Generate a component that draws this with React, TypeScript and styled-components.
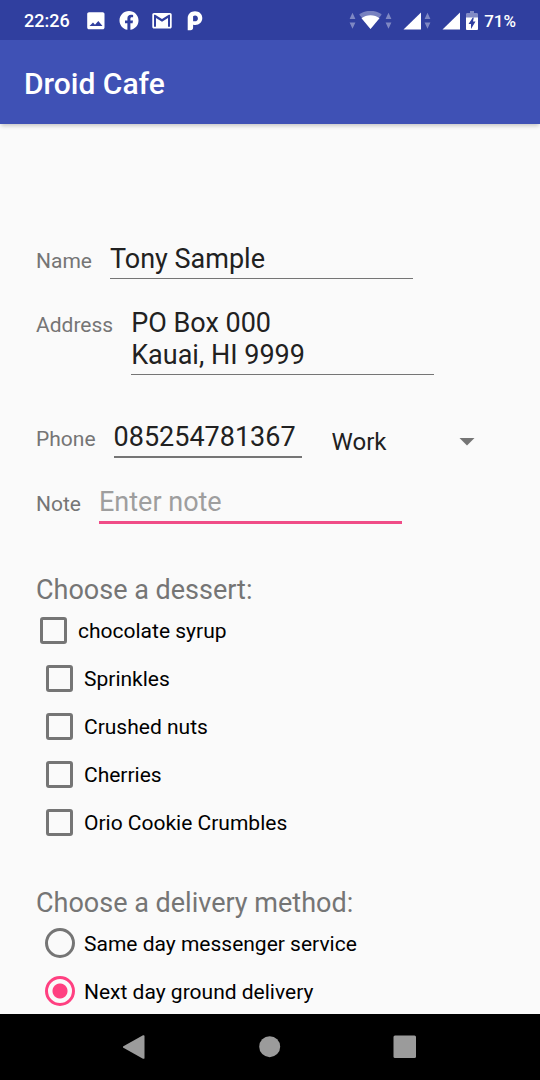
import React, { useState } from 'react';
import styled, { createGlobalStyle, css } from 'styled-components';

const GlobalStyle = createGlobalStyle`
  *, *::before, *::after { box-sizing: border-box; }
  body {
    margin: 0;
    background: #fafafa;
    font-family: Roboto, "Liberation Sans", sans-serif;
  }
`;

const Screen = styled.div`
  display: flex;
  flex-direction: column;
  height: 100vh;
`;

const StatusBar = styled.div`
  display: flex;
  flex: none;
  align-items: center;
  justify-content: space-between;
  height: 40px;
  padding: 1px 24px 0;
  background: #303f9f;
  color: #fff;
`;

const Notifications = styled.div`
  display: flex;
  align-items: center;
  gap: 9px;
`;

const Clock = styled.time`
  margin-right: 5px;
  font-size: 18px;
  font-weight: 500;
  line-height: 22px;
`;

const Indicators = styled.div`
  display: flex;
  align-items: center;
  gap: 11px;
`;

const Cluster = styled.div<{ $gap: number }>`
  display: flex;
  align-items: center;
  gap: ${({ $gap }) => $gap}px;
`;

const BatteryLevel = styled.span`
  font-size: 17px;
  font-weight: 500;
  line-height: 22px;
`;

const Glyph = styled.svg`
  display: block;
  flex: none;
  fill: currentColor;
`;

const AppBar = styled.header`
  display: flex;
  flex: none;
  align-items: center;
  height: 84px;
  padding: 3px 24px 0;
  background: #3f51b5;
  color: #fff;
  box-shadow: 0 3px 4px -1px rgba(0, 0, 0, 0.2);
  z-index: 1;
`;

const Title = styled.h1`
  margin: 0;
  font-size: 30px;
  font-weight: 500;
  line-height: 36px;
`;

const Content = styled.main`
  flex: 1;
  min-height: 0;
  overflow-y: auto;
  scrollbar-width: none;
  padding: 119px 36px 0;
`;

const Fields = styled.div`
  display: flex;
  flex-direction: column;
  gap: 28px;
`;

const FieldRow = styled.div<{ $roomy?: boolean }>`
  display: flex;
  align-items: baseline;
  gap: 18px;
  padding-bottom: ${({ $roomy }) => ($roomy ? 18 : 0)}px;
`;

const FieldLabel = styled.label`
  color: #757575;
  font-size: 21px;
  line-height: 24px;
`;

const fieldText = css`
  display: block;
  min-width: 0;
  margin: 0;
  padding: 0 0 3px;
  border: 0;
  border-radius: 0;
  outline: 0;
  background: transparent;
  color: #212121;
  font-family: inherit;
  font-size: 27px;
  line-height: 32px;
`;

const TextInput = styled.input<{ $width: number; $line?: number; $active?: boolean }>`
  ${fieldText}
  box-sizing: content-box;
  width: ${({ $width }) => $width}px;
  height: 32px;
  border-bottom: ${({ $line = 1 }) => $line}px solid ${({ $active }) => ($active ? '#f04c87' : '#757575')};

  &::placeholder {
    color: #9e9e9e;
    opacity: 1;
  }
`;

const TextArea = styled.textarea`
  ${fieldText}
  box-sizing: content-box;
  width: 303px;
  height: 64px;
  border-bottom: 1px solid #757575;
  overflow: hidden;
  resize: none;
`;

const SelectBox = styled.div`
  position: relative;
  align-self: flex-start;
  width: 143px;
  margin-left: 12px;
  padding-top: 7px;
`;

const Select = styled.select`
  display: block;
  width: 100%;
  padding: 0;
  border: 0;
  outline: 0;
  appearance: none;
  background: transparent;
  color: #212121;
  font-family: inherit;
  font-size: 24px;
  line-height: 28px;
`;

const SelectArrow = styled(Glyph)`
  position: absolute;
  top: 17px;
  right: 0;
  color: #757575;
  pointer-events: none;
`;

const PhoneRow = styled(FieldRow)`
  height: 37px;
`;

const Group = styled.fieldset<{ $space: number }>`
  min-width: 0;
  margin: ${({ $space }) => $space}px 0 0;
  padding: 0;
  border: 0;
`;

const GroupTitle = styled.legend`
  padding: 0;
  color: #757575;
  font-size: 27px;
  line-height: 32px;
`;

const Option = styled.label<{ $indent: number }>`
  display: flex;
  align-items: center;
  height: 48px;
  padding-left: ${({ $indent }) => $indent}px;
  color: #000;
  font-size: 21px;
  line-height: 24px;
`;

const OptionText = styled.span`
  padding-top: 2px;
`;

const Checkbox = styled.input`
  appearance: none;
  flex: none;
  width: 27px;
  height: 27px;
  margin: 0 11px 0 0;
  border: 3px solid #757575;
  border-radius: 3px;

  &:checked {
    border-color: #ff4081;
    background: #ff4081;
  }
`;

const Radio = styled.input`
  appearance: none;
  flex: none;
  width: 30px;
  height: 30px;
  margin: 0 9px 0 0;
  border: 3px solid #757575;
  border-radius: 50%;

  &:checked {
    border-color: #ff4081;
    background: radial-gradient(circle, #ff4081 7px, transparent 8px);
  }
`;

const NavBar = styled.nav`
  display: flex;
  flex: none;
  justify-content: center;
  height: 66px;
  background: #000;
`;

const NavButton = styled.button`
  display: flex;
  align-items: center;
  justify-content: center;
  width: 25%;
  padding: 0;
  border: 0;
  background: transparent;
  color: #9b9b9b;
`;

const DataArrows = () => (
  <Glyph width="8" height="18" viewBox="0 0 8 18" opacity="0.38">
    <path d="M4.500 .8l2.900 6.200H1.600zM4.500 16.700l-2.900-6.200h5.800z" />
  </Glyph>
);

const Signal = () => (
  <Glyph width="18" height="20" viewBox="0 0 18 20">
    <path d="M18 1.500v17H.5z" />
  </Glyph>
);

const toppings = ['chocolate syrup', 'Sprinkles', 'Crushed nuts', 'Cherries', 'Orio Cookie Crumbles'];
const deliveries = ['Same day messenger service', 'Next day ground delivery'];

export default function App() {
  const [delivery, setDelivery] = useState(deliveries[1]);

  return (
    <Screen>
      <GlobalStyle />
      <StatusBar>
        <Notifications>
          <Clock>22:26</Clock>
          <Glyph width="24" height="24" viewBox="0 0 24 24">
            <path d="M20.500 18.500V5c0-1-.8-1.800-1.800-1.800H5C4 3.200 3.200 4 3.200 5v13.500c0 1 .8 1.800 1.800 1.800h13.700c1 0 1.800-.8 1.800-1.800zM9 13.500l2 2.300 3.300-3.800 4.200 5H5.500z" />
          </Glyph>
          <Glyph width="24" height="24" viewBox="0 0 24 24">
            <path d="M21.500 11.500c0-5.250-4.250-9.500-9.500-9.500S2.500 6.250 2.500 11.500c0 4.700 3.400 8.600 7.900 9.370V14.200H8v-2.700h2.400V9.400c0-2.400 1.400-3.700 3.600-3.700 1 0 2.100.2 2.100.2v2.300h-1.200c-1.200 0-1.500.7-1.500 1.500v1.800h2.600l-.4 2.700h-2.200v6.670c4.600-.7 8.100-4.600 8.100-9.370z" />
          </Glyph>
          <Glyph width="24" height="24" viewBox="0 0 24 24">
            <path d="M20 4H4c-1 0-1.700.8-1.700 1.700v12c0 1 .7 1.800 1.700 1.800h16c1 0 1.700-.8 1.700-1.800v-12C21.700 4.800 21 4 20 4zm0 13.700h-2V8.900L12 12.800 6 8.900v8.800H4v-12h1.200l6.800 4.400 6.800-4.400H20z" />
          </Glyph>
          <Glyph width="24" height="24" viewBox="0 0 24 24">
            <path
              fillRule="evenodd"
              d="M4.700 21.200V9.200C4.700 5 7.700 2.200 12 2.200c4.300 0 7.300 2.800 7.300 6.900s-3 7-7 7c-.8 0-1.500-.1-2.200-.4v2.900c0 1.800-.9 2.600-2.600 2.600zM10.100 12.300h1.900c1.700 0 2.900-1.200 2.900-2.900 0-1.600-1.200-2.800-2.800-2.800-.9 0-1.500.2-2 .6z"
            />
          </Glyph>
        </Notifications>
        <Indicators>
          <Cluster $gap={2}>
            <DataArrows />
            <Glyph width="24" height="20" viewBox="0 0 24 20">
              <path opacity="0.35" d="M12.500-.2C8.100-.2 4.200 1.200 1.200 3.400L12.500 18 23.700 3.400C20.700 1.200 16.900-.2 12.500-.2z" />
              <path d="M12.500 4.200c-3.400 0-6.500 1.100-9 3l9 10.800 9-10.800c-2.500-1.900-5.600-3-9-3z" />
            </Glyph>
            <DataArrows />
          </Cluster>
          <Cluster $gap={2}>
            <Signal />
            <DataArrows />
          </Cluster>
          <Cluster $gap={6}>
            <Signal />
            <Glyph width="12" height="20" viewBox="0 0 12 20">
              <path opacity="0.4" d="M4 0h4v2h2.700c.7 0 1.300.6 1.300 1.300V7H0V3.300C0 2.600.6 2 1.300 2H4z" />
              <path d="M0 6.500h6.800L2.500 13H5v5l4.500-7.500H7l.8-4H12v11.400c0 .7-.6 1.200-1.300 1.200H1.300c-.7 0-1.300-.5-1.300-1.200z" />
            </Glyph>
            <BatteryLevel>71%</BatteryLevel>
          </Cluster>
        </Indicators>
      </StatusBar>

      <AppBar>
        <Title>Droid Cafe</Title>
      </AppBar>

      <Content>
        <Fields>
          <FieldRow>
            <FieldLabel htmlFor="name">Name</FieldLabel>
            <TextInput id="name" type="text" defaultValue="Tony Sample" $width={303} />
          </FieldRow>
          <FieldRow $roomy>
            <FieldLabel htmlFor="address">Address</FieldLabel>
            <TextArea id="address" rows={2} defaultValue={'PO Box 000\nKauai, HI 9999'} />
          </FieldRow>
          <PhoneRow>
            <FieldLabel htmlFor="phone">Phone</FieldLabel>
            <TextInput id="phone" type="tel" defaultValue="085254781367" $width={188} $line={2} />
            <SelectBox>
              <Select aria-label="Phone type" defaultValue="Work">
                <option>Home</option>
                <option>Work</option>
                <option>Mobile</option>
                <option>Other</option>
              </Select>
              <SelectArrow width="16" height="8" viewBox="0 0 16 8">
                <path d="M.5 0h15L8 7.500z" />
              </SelectArrow>
            </SelectBox>
          </PhoneRow>
          <FieldRow>
            <FieldLabel htmlFor="note">Note</FieldLabel>
            <TextInput id="note" type="text" placeholder="Enter note" $width={303} $line={3} $active />
          </FieldRow>
        </Fields>

        <Group $space={50}>
          <GroupTitle>Choose a dessert:</GroupTitle>
          {toppings.map((topping, index) => (
            <Option key={topping} $indent={index === 0 ? 4 : 10}>
              <Checkbox type="checkbox" name="topping" value={topping} />
              <OptionText>{topping}</OptionText>
            </Option>
          ))}
        </Group>

        <Group $space={41}>
          <GroupTitle>Choose a delivery method:</GroupTitle>
          {deliveries.map((method) => (
            <Option key={method} $indent={9}>
              <Radio
                type="radio"
                name="delivery"
                value={method}
                checked={delivery === method}
                onChange={() => setDelivery(method)}
              />
              <OptionText>{method}</OptionText>
            </Option>
          ))}
        </Group>
      </Content>

      <NavBar>
        <NavButton type="button" aria-label="Back">
          <Glyph width="24" height="24" viewBox="1 0 24 24">
            <path d="M1.400 11.200L21 .3c.9-.4 1.500 0 1.500.8v21.800c0 .8-.6 1.200-1.500.8L1.400 12.800c-.8-.5-.8-1.100 0-1.600z" />
          </Glyph>
        </NavButton>
        <NavButton type="button" aria-label="Home">
          <Glyph width="24" height="24" viewBox="0 0 24 24">
            <circle cx="11.700" cy="11.700" r="10.500" />
          </Glyph>
        </NavButton>
        <NavButton type="button" aria-label="Recent apps">
          <Glyph width="24" height="24" viewBox="0 0 24 24">
            <rect x="0.500" y="0.500" width="22.500" height="22.500" rx="1.500" />
          </Glyph>
        </NavButton>
      </NavBar>
    </Screen>
  );
}
